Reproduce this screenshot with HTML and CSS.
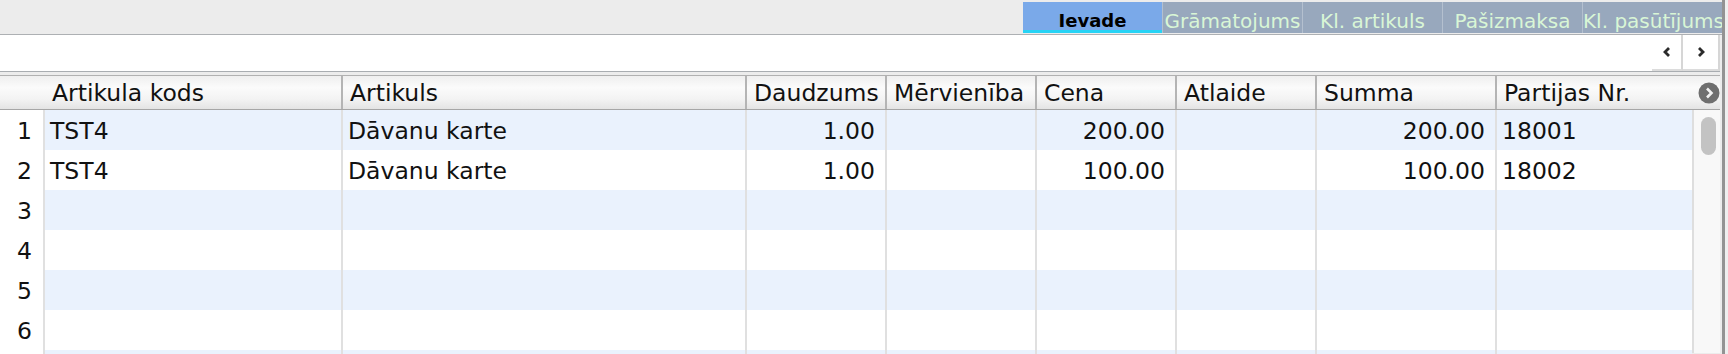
FILE: index.html
```html
<!DOCTYPE html>
<html lang="lv">
<head>
    <meta charset="UTF-8">
    <title>Ievade</title>
    <link rel="stylesheet" href="styles.css">
</head>
<body>

<div class="window">
    <!-- Cilnes -->
    <div class="tabbar">
        <div class="tab active">Ievade</div>
        <div class="tab">Grāmatojums</div>
        <div class="tab">Kl. artikuls</div>
        <div class="tab">Pašizmaksa</div>
        <div class="tab">Kl. pasūtījums</div>
    </div>

    <!-- Meklēšanas rinda -->
    <div class="searchrow">
        <div class="navbtn prev">
            <svg width="10" height="12" viewBox="0 0 10 12"><polyline points="7,2 3,6 7,10" fill="none" stroke="#2b2b2b" stroke-width="2.8"/></svg>
        </div>
        <div class="navbtn next">
            <svg width="10" height="12" viewBox="0 0 10 12"><polyline points="3,2 7,6 3,10" fill="none" stroke="#2b2b2b" stroke-width="2.8"/></svg>
        </div>
    </div>

    <!-- Tabula -->
    <div class="table">
        <div class="thead">
            <div class="th rownum"></div>
            <div class="th">Artikula kods</div>
            <div class="th">Artikuls</div>
            <div class="th">Daudzums</div>
            <div class="th">Mērvienība</div>
            <div class="th">Cena</div>
            <div class="th">Atlaide</div>
            <div class="th">Summa</div>
            <div class="th last">Partijas Nr.</div>
            <div class="th colmenu">
                <svg width="22" height="22" viewBox="0 0 22 22">
                    <circle cx="11" cy="11" r="10.5" fill="#6f6f6f"/>
                    <polyline points="9,6.5 13.5,11 9,15.5" fill="none" stroke="#f2f2f2" stroke-width="2.6"/>
                </svg>
            </div>
        </div>

        <div class="tbody">
            <div class="rows" id="rows"></div>
            <div class="vscroll"><div class="thumb"></div></div>
        </div>
    </div>
</div>

<script>
    const data = [
        ['TST4', 'Dāvanu karte', '1.00', '', '200.00', '', '200.00', '18001'],
        ['TST4', 'Dāvanu karte', '1.00', '', '100.00', '', '100.00', '18002']
    ];
    const numCols = [2, 4, 6];
    const rowsEl = document.getElementById('rows');

    // Rindas ar datiem un tukšās rindas (7. rinda redzama tikai daļēji)
    for (let i = 0; i < 7; i++) {
        const row = document.createElement('div');
        row.className = 'row' + (i % 2 === 0 ? ' odd' : '');

        const num = document.createElement('div');
        num.className = 'td rownum';
        num.textContent = i < 6 ? i + 1 : '';
        row.appendChild(num);

        const values = data[i] || ['', '', '', '', '', '', '', ''];
        values.forEach((val, c) => {
            const cell = document.createElement('div');
            cell.className = 'td' + (numCols.includes(c) ? ' num' : '') + (c === 7 ? ' last' : '');
            cell.textContent = val;
            row.appendChild(cell);
        });
        rowsEl.appendChild(row);
    }
</script>

</body>
</html>
```

FILE: styles.css
```css
body {
    margin: 0;
    padding: 0;
    height: 354px;
    overflow: hidden;
    background-color: #efefef;
    font-family: "DejaVu Sans", "Liberation Sans", sans-serif;
    color: #111;
}
.window {
    width: 1722px;
    height: 354px;
    overflow: hidden;
    background-color: #ececec;
    border-right: 3px solid #939393;
}

/* Cilnes */
.tabbar {
    height: 35px;
    box-sizing: border-box;
    padding-top: 2px;
    display: flex;
    justify-content: flex-end;
    align-items: flex-start;
    border-bottom: 1px solid #adb0b3;
}
.tab {
    width: 140px;
    height: 31px;
    box-sizing: border-box;
    padding-top: 8px;
    line-height: 22px;
    font-size: 20px;
    text-align: center;
    white-space: nowrap;
    overflow: hidden;
    color: #d9f6d6;
    background-color: #98a8bd;
    border-left: 1px solid #b4c0cf;
}
.tab.active {
    width: 139px;
    border-left: none;
    font-size: 18px;
    font-weight: bold;
    color: #000;
    background-color: #7aa9e9;
    border-bottom: 3px solid #27d3f5;
}

/* Meklēšanas rinda */
.searchrow {
    width: 1720px;
    height: 36px;
    background-color: #fff;
    border-bottom: 1px solid #a9adb1;
    display: flex;
    justify-content: flex-end;
}
.navbtn {
    height: 36px;
    box-sizing: border-box;
    display: flex;
    align-items: center;
    justify-content: center;
    border-right: 2px solid #d6d6d6;
    border-bottom: 2px solid #dcdcdc;
}
.navbtn.prev {
    width: 31px;
}
.navbtn.next {
    width: 37px;
}

/* Tabula */
.table {
    margin-top: 3px;
    width: 1720px;
    font-size: 23.5px;
}
.thead {
    display: grid;
    grid-template-columns: 45px 298px 404px 140px 150px 140px 140px 180px 197px 26px;
    height: 33px;
    border-top: 1px solid #b1b1b1;
    border-bottom: 1px solid #a6a6a6;
    background: linear-gradient(#efefef, #fbfbfb 35%, #f3f3f3 70%, #e4e4e4);
}
.th {
    box-sizing: border-box;
    padding: 3px 0 0 7px;
    line-height: 29px;
    white-space: nowrap;
    overflow: hidden;
    border-right: 2px solid #b4b4b4;
}
.th.rownum,
.th.last,
.th.colmenu {
    border-right: none;
}
.th.colmenu {
    padding: 0;
    display: flex;
    align-items: center;
    justify-content: flex-end;
}

.tbody {
    display: flex;
}
.rows {
    width: 1692px;
}
.row {
    display: grid;
    grid-template-columns: 45px 298px 404px 140px 150px 140px 140px 180px 195px;
    height: 40px;
    background-color: #fff;
}
.td {
    box-sizing: border-box;
    height: 40px;
    padding: 3px 0 0 5px;
    line-height: 36px;
    white-space: nowrap;
    overflow: hidden;
    border-right: 2px solid #e0e0e0;
}
.row.odd .td {
    background-color: #eaf2fd;
}
.td.num {
    text-align: right;
    padding: 3px 10px 0 0;
}
.td.last {
    border-right: none;
}
.row .td.rownum {
    background-color: #fff;
    text-align: right;
    padding: 3px 11px 0 0;
}

.vscroll {
    width: 28px;
    height: 243px;
    box-sizing: border-box;
    background-color: #f8f8f8;
    border-left: 2px solid #dedede;
}
.thumb {
    margin: 7px 0 0 7px;
    width: 15px;
    height: 38px;
    border-radius: 8px;
    background-color: #c3c3c3;
}
```
